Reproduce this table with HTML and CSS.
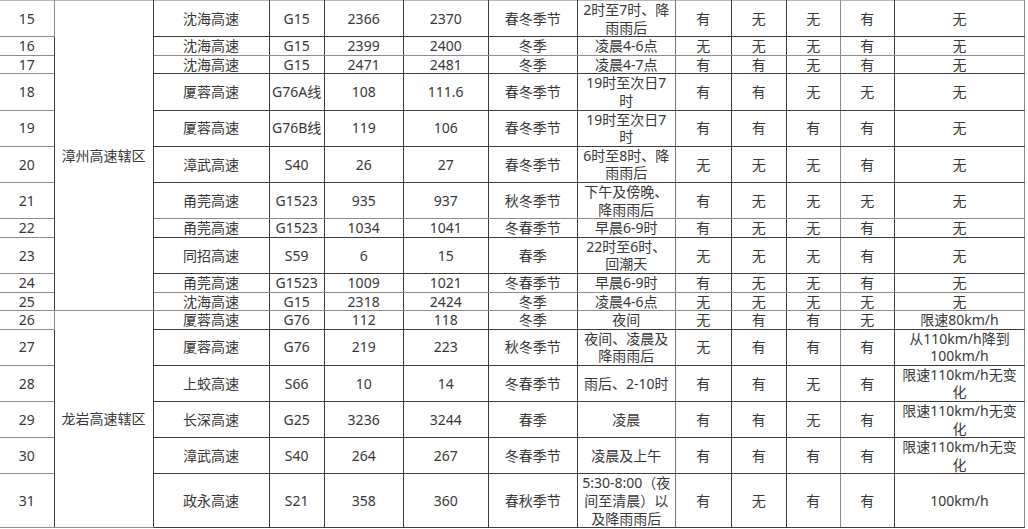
FILE: index.html
```html
<!DOCTYPE html>
<html lang="zh-CN">
<head>
<meta charset="utf-8">
<title>高速路段</title>
<link rel="stylesheet" href="styles.css">
</head>
<body>
<table class="grid">
<colgroup>
<col class="w54"><col class="w99"><col class="w116"><col class="w55"><col class="w79"><col class="w85"><col class="w89"><col class="w98"><col class="w56"><col class="w55"><col class="w54"><col class="w54"><col class="w130">
</colgroup>
<tbody>
<tr class="top"><td class="n">15</td><td class="area" rowspan="11">漳州高速辖区</td><td>沈海高速</td><td>G15</td><td>2366</td><td>2370</td><td>春冬季节</td><td class="t">2时至7时、降<br>雨雨后</td><td>有</td><td>无</td><td class="g">无</td><td>有</td><td class="s">无</td></tr>
<tr class="lite"><td class="n">16</td><td>沈海高速</td><td>G15</td><td>2399</td><td>2400</td><td>冬季</td><td class="t">凌晨4-6点</td><td>无</td><td>无</td><td class="g">无</td><td>有</td><td class="s">无</td></tr>
<tr><td class="n">17</td><td>沈海高速</td><td>G15</td><td>2471</td><td>2481</td><td>冬季</td><td class="t">凌晨4-7点</td><td>有</td><td>有</td><td class="g">无</td><td>有</td><td class="s">无</td></tr>
<tr><td class="n">18</td><td>厦蓉高速</td><td>G76A线</td><td>108</td><td>111.6</td><td>春冬季节</td><td class="t">19时至次日7<br>时</td><td>有</td><td>有</td><td class="g">无</td><td>无</td><td class="s">无</td></tr>
<tr><td class="n">19</td><td>厦蓉高速</td><td>G76B线</td><td>119</td><td>106</td><td>春冬季节</td><td class="t">19时至次日7<br>时</td><td>有</td><td>有</td><td class="g">有</td><td>有</td><td class="s">无</td></tr>
<tr><td class="n">20</td><td>漳武高速</td><td>S40</td><td>26</td><td>27</td><td>春冬季节</td><td class="t">6时至8时、降<br>雨雨后</td><td>无</td><td>无</td><td class="g">无</td><td>有</td><td class="s">无</td></tr>
<tr class="lite"><td class="n">21</td><td>甬莞高速</td><td>G1523</td><td>935</td><td>937</td><td>秋冬季节</td><td class="t">下午及傍晚、<br>降雨雨后</td><td>有</td><td>无</td><td class="g">无</td><td>无</td><td class="s">无</td></tr>
<tr><td class="n">22</td><td>甬莞高速</td><td>G1523</td><td>1034</td><td>1041</td><td>冬春季节</td><td class="t">早晨6-9时</td><td>有</td><td>无</td><td class="g">无</td><td>有</td><td class="s">无</td></tr>
<tr><td class="n">23</td><td>同招高速</td><td>S59</td><td>6</td><td>15</td><td>春季</td><td class="t">22时至6时、<br>回潮天</td><td>无</td><td>无</td><td class="g">无</td><td>有</td><td class="s">无</td></tr>
<tr class="lite"><td class="n">24</td><td>甬莞高速</td><td>G1523</td><td>1009</td><td>1021</td><td>冬春季节</td><td class="t">早晨6-9时</td><td>有</td><td>无</td><td class="g">无</td><td>有</td><td class="s">无</td></tr>
<tr class="lite"><td class="n">25</td><td>沈海高速</td><td>G15</td><td>2318</td><td>2424</td><td>冬季</td><td class="t">凌晨4-6点</td><td>无</td><td>无</td><td class="g">无</td><td>无</td><td class="s">无</td></tr>
<tr><td class="n">26</td><td class="area" rowspan="6">龙岩高速辖区</td><td>厦蓉高速</td><td>G76</td><td>112</td><td>118</td><td>冬季</td><td class="t">夜间</td><td>无</td><td>有</td><td class="g">有</td><td>无</td><td class="s">限速80km/h</td></tr>
<tr><td class="n">27</td><td>厦蓉高速</td><td>G76</td><td>219</td><td>223</td><td>秋冬季节</td><td class="t">夜间、凌晨及<br>降雨雨后</td><td>无</td><td>有</td><td class="g">有</td><td>有</td><td class="s">从110km/h降到<br>100km/h</td></tr>
<tr><td class="n">28</td><td>上蛟高速</td><td>S66</td><td>10</td><td>14</td><td>冬春季节</td><td class="t">雨后、2-10时</td><td>有</td><td>有</td><td class="g">无</td><td>有</td><td class="s">限速110km/h无变<br>化</td></tr>
<tr><td class="n">29</td><td>长深高速</td><td>G25</td><td>3236</td><td>3244</td><td>春季</td><td class="t">凌晨</td><td>有</td><td>有</td><td class="g">无</td><td>有</td><td class="s">限速110km/h无变<br>化</td></tr>
<tr><td class="n">30</td><td>漳武高速</td><td>S40</td><td>264</td><td>267</td><td>冬春季节</td><td class="t">凌晨及上午</td><td>有</td><td>有</td><td class="g">有</td><td>有</td><td class="s">限速110km/h无变<br>化</td></tr>
<tr><td class="n">31</td><td>政永高速</td><td>S21</td><td>358</td><td>360</td><td>春秋季节</td><td class="t">5:30-8:00（夜<br>间至清晨）以<br>及降雨雨后</td><td>有</td><td>无</td><td class="g">有</td><td>有</td><td class="s">100km/h</td></tr>
</tbody>
</table>
</body>
</html>
```

FILE: styles.css
```css
html, body {
  margin: 0;
  padding: 0;
  background: #ffffff;
}

body {
  font-family: "Noto Sans", "Noto Sans CJK SC", sans-serif;
  font-size: 14px;
  color: #383838;
}

.grid {
  border-collapse: collapse;
  table-layout: fixed;
  width: 1025px;
}

.w54 { width: 54px; }
.w55 { width: 55px; }
.w56 { width: 56px; }
.w79 { width: 79px; }
.w85 { width: 85px; }
.w89 { width: 89px; }
.w98 { width: 98px; }
.w99 { width: 99px; }
.w116 { width: 116px; }
.w130 { width: 130px; }

.grid td {
  border: 1px solid #3c3c3c;
  padding: 0;
  text-align: center;
  vertical-align: middle;
  line-height: 17.6px;
  white-space: nowrap;
  overflow: hidden;
}

.grid tr.top td {
  border-top-color: #b8b8b8;
}

.grid tr.lite td {
  border-bottom-color: #8c8c8c;
}

.grid td.n {
  border-left: none;
  border-right-color: #8c8c8c;
  border-bottom-color: #8c8c8c;
}

.grid td.t {
  border-right-color: #777777;
}

.grid td.g {
  border-right-color: #8c8c8c;
}

.grid td.s {
  border-right-color: #8c8c8c;
}

.grid td.area {
  border-bottom-color: #8c8c8c;
}
```
